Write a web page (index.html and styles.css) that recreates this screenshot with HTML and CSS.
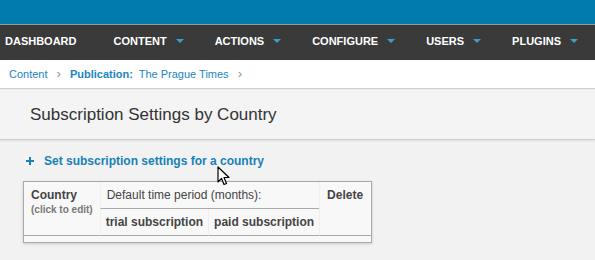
FILE: index.html
```html
<!DOCTYPE html>
<html lang="en">
<head>
  <meta charset="UTF-8" />
  <title>Subscription Settings by Country</title>
  <link rel="stylesheet" href="styles.css">
</head>
<body>

<div class="topbar"></div>

<nav class="mainnav">
  <a href="#" class="first">Dashboard</a>
  <a href="#">Content <span class="caret"></span></a>
  <a href="#">Actions <span class="caret"></span></a>
  <a href="#">Configure <span class="caret"></span></a>
  <a href="#">Users <span class="caret"></span></a>
  <a href="#">Plugins <span class="caret"></span></a>
</nav>

<div class="crumbs">
  <a href="#">Content</a>
  <span class="sep">&rsaquo;</span>
  <a href="#"><strong>Publication:</strong>&nbsp; The Prague Times</a>
  <span class="sep">&rsaquo;</span>
</div>

<div class="pagehead">
  <h1>Subscription Settings by Country</h1>
</div>

<div class="content">
  <a href="#" class="addlink">
    <svg class="plus" width="8" height="8" viewBox="0 0 8 8"><path d="M3 0h2v3h3v2H5v3H3V5H0V3h3z" fill="#1681b8"/></svg>
    Set subscription settings for a country
  </a>

  <table class="settings">
    <thead>
      <tr>
        <th rowspan="2" class="country">Country<br><small>(click to edit)</small></th>
        <th colspan="2" class="period">Default time period (months):</th>
        <th rowspan="2" class="del">Delete</th>
      </tr>
      <tr>
        <th class="sub">trial subscription</th>
        <th class="sub">paid subscription</th>
      </tr>
    </thead>
    <tbody>
      <tr><td colspan="4"></td></tr>
    </tbody>
  </table>

  <svg class="cursor" width="14" height="21" viewBox="0 0 14 21">
    <path d="M1 1 L1 16 L4.5 12.5 L7 18.5 L9.5 17.5 L7 11.5 L12 11.5 Z" fill="#fff" stroke="#000" stroke-width="1.2" stroke-linejoin="round"/>
  </svg>
</div>

</body>
</html>
```

FILE: styles.css
```css
body {
  margin: 0;
  font-family: "Liberation Sans", Arial, sans-serif;
  background: #f2f2f2;
  color: #333;
}
a {
  text-decoration: none;
}
.topbar {
  height: 24px;
  background: #017aad;
  border-bottom: 1px solid #9a9a9a;
}
.mainnav {
  display: flex;
  height: 32px;
  padding-bottom: 3px;
  align-items: center;
  background: #3a3a3a;
  padding-left: 5px;
}
.mainnav a {
  color: #fff;
  font-size: 11px;
  font-weight: bold;
  text-transform: uppercase;
  margin-right: 31px;
  display: flex;
  align-items: center;
}
.mainnav a.first {
  margin-right: 37px;
}
.caret {
  width: 0;
  height: 0;
  margin-left: 9px;
  border-left: 4px solid transparent;
  border-right: 4px solid transparent;
  border-top: 4px solid #3b9ed2;
}
.crumbs {
  height: 27px;
  padding-bottom: 1px;
  background: #fff;
  border-bottom: 1px solid #d0d0d0;
  display: flex;
  align-items: center;
  padding-left: 9px;
  font-size: 11px;
}
.crumbs a {
  color: #1a86bf;
}
.crumbs .sep {
  color: #7a9bb0;
  font-size: 13px;
  margin: 0 9px;
}
.pagehead {
  height: 49px;
  background: #f4f4f4;
  border-top: 1px solid #ececec;
  border-bottom: 1px solid #cfcfcf;
  box-shadow: 0 1px 2px #ddd;
  display: flex;
  align-items: center;
  padding-left: 30px;
}
.pagehead h1 {
  margin: 0;
  font-size: 17px;
  font-weight: normal;
  color: #333;
}
.content {
  position: relative;
  padding: 11px 23px 20px;
}
.addlink {
  display: inline-flex;
  align-items: center;
  color: #1681b8;
  font-size: 12px;
  font-weight: bold;
  margin-left: 3px;
}
.plus {
  margin-right: 10px;
}
.settings {
  margin-top: 12px;
  border: 1px solid #a9a9a9;
  border-collapse: separate;
  border-spacing: 0;
  background: #f8f8f8;
  box-shadow: 0 1px 3px #ccc;
  font-size: 12px;
}
.settings th {
  text-align: left;
  vertical-align: top;
  padding: 6px 6px 4px 6px;
  color: #444;
  border-left: 1px solid #efefef;
  border-bottom: 1px solid #aaa;
}
.settings th.country {
  border-left: none;
  padding-left: 7px;
  padding-right: 7px;
}
.settings th small {
  font-size: 10px;
  color: #777;
}
.settings th.period {
  font-weight: normal;
  padding: 6px;
}
.settings th.sub {
  padding: 6px 5px 6px 5px;
}
.settings th.del {
  padding-left: 7px;
  padding-right: 8px;
}
.settings td {
  height: 6px;
  padding: 0;
}
.cursor {
  position: absolute;
  left: 217px;
  top: 26px;
}
```
